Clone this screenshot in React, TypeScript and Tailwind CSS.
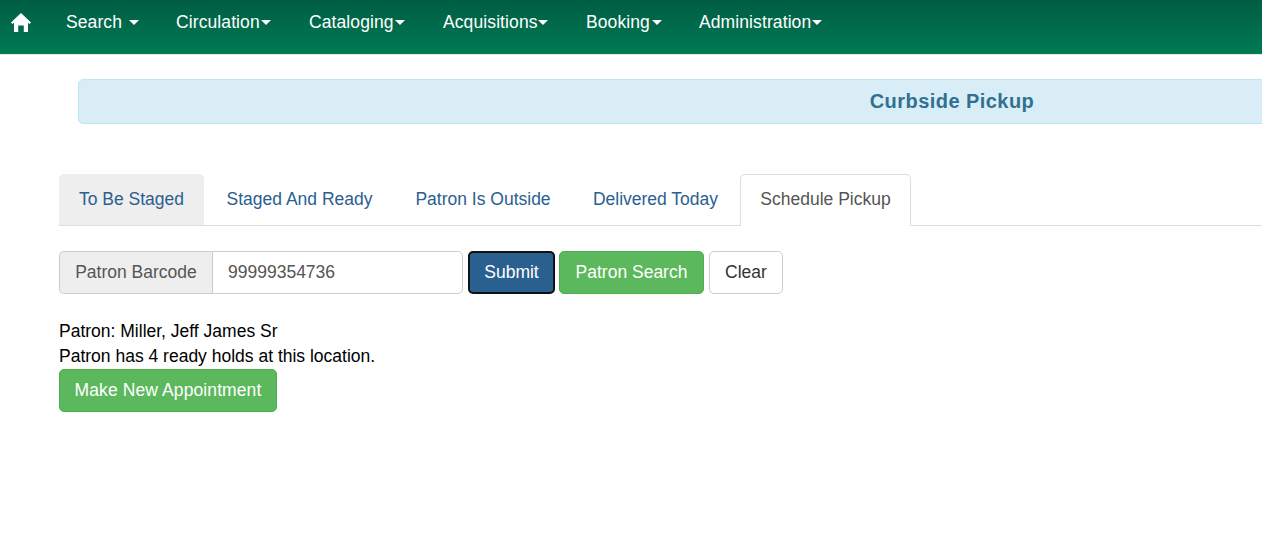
const navItems = [
  { label: "Search", labelClass: "w-[55px] mr-[8px]", className: "ml-[35px]" },
  { label: "Circulation", labelClass: "w-[85px]", className: "ml-[37px]" },
  { label: "Cataloging", labelClass: "w-[86px]", className: "ml-[38px]" },
  { label: "Acquisitions", labelClass: "w-[95px]", className: "ml-[38px]" },
  { label: "Booking", labelClass: "w-[66px]", className: "ml-[38px]" },
  { label: "Administration", labelClass: "w-[113px]", className: "ml-[37px]" },
];

const tabs = [
  { label: "To Be Staged", className: "w-[145px] bg-[#eee]" },
  { label: "Staged And Ready", className: "w-[187px]" },
  { label: "Patron Is Outside", className: "w-[176px]" },
  { label: "Delivered Today", className: "w-[165px]" },
];

function Caret() {
  return <span className="block w-0 h-0 border-x-[5px] border-x-transparent border-t-[5px] border-t-white" />;
}

export default function App() {
  return (
    <div className="w-[1262px] h-[534px] overflow-hidden bg-white text-[17.5px] leading-[25px] text-black font-['Liberation_Sans',Arial,sans-serif]">
      {/* Navbar */}
      <nav className="h-[55px] flex items-center pl-[11px] pb-[10px] border-b border-[#e7e7e7] bg-gradient-to-b from-[#005d43] to-[#007a53] text-white">
        <svg viewBox="0 0 20 19" className="w-[20px] h-[19px] mt-[1px]" fill="white">
          <path d="M10 0 L20 9.6 L18.6 11 L17 9.8 V19 H12.8 V12.5 H7.2 V19 H3 V9.8 L1.4 11 L0 9.6 Z" />
        </svg>
        {navItems.map((item) => (
          <a key={item.label} className={`flex items-center ${item.className}`}>
            <span className={`whitespace-nowrap tracking-[0.1px] ${item.labelClass}`}>{item.label}</span>
            <Caret />
          </a>
        ))}
      </nav>

      {/* Title banner */}
      <div className="ml-[78px] mt-[24px] w-[1748px] h-[45px] flex items-center justify-center rounded-[5px] border border-[#bce8f1] bg-[#d9edf7] text-[#31708f] font-bold text-[20px] tracking-[0.45px]">
        Curbside Pickup
      </div>

      {/* Tabs */}
      <div className="ml-[59px] mt-[50px] h-[52px] flex items-stretch border-b border-[#ddd]">
        {tabs.map((tab) => (
          <a key={tab.label} className={`h-[51px] mr-[2px] flex items-center justify-center rounded-t-[5px] text-[#2a6090] ${tab.className}`}>
            {tab.label}
          </a>
        ))}
        <a className="h-[52px] w-[171px] pb-[2px] flex items-center justify-center rounded-t-[5px] border border-b-0 border-[#ddd] bg-white text-[#555]">
          Schedule Pickup
        </a>
      </div>

      {/* Barcode form */}
      <div className="ml-[59px] mt-[25px] flex items-stretch h-[43px]">
        <span className="w-[153px] flex items-center justify-center rounded-l-[5px] border border-r-0 border-[#ccc] bg-[#eee] text-[#555]">Patron Barcode</span>
        <span className="w-[251px] pl-[15px] flex items-center rounded-r-[5px] border border-[#ccc] bg-white text-[#555]">99999354736</span>
        <button className="ml-[5px] w-[87px] rounded-[5px] border-2 border-[#111] bg-[#2a6090] text-white">Submit</button>
        <button className="ml-[4px] w-[145px] rounded-[5px] border border-[#4cae4c] bg-[#5cb85c] text-white">Patron Search</button>
        <button className="ml-[5px] w-[74px] rounded-[5px] border border-[#ccc] bg-white text-[#333]">Clear</button>
      </div>

      {/* Patron info */}
      <div className="ml-[59px] mt-[25px]">
        <div>Patron: Miller, Jeff James Sr</div>
        <div>Patron has 4 ready holds at this location.</div>
        <button className="block h-[43px] w-[218px] rounded-[5px] border border-[#4cae4c] bg-[#5cb85c] text-white tracking-[0.1px]">Make New Appointment</button>
      </div>
    </div>
  );
}
